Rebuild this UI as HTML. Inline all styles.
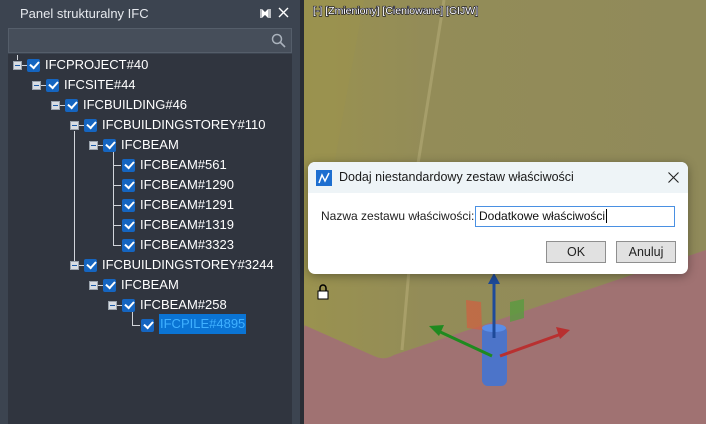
<!DOCTYPE html>
<html><head><meta charset="utf-8"><style>
*{margin:0;padding:0;box-sizing:border-box}
body{width:706px;height:424px;overflow:hidden;position:relative;font-family:"Liberation Sans",sans-serif;background:#2f343d}
#panel{position:absolute;left:0;top:0;width:303px;height:424px;background:#3c4450}
#title{position:absolute;left:20px;top:6px;color:#e6e9ee;font-size:13px}
#search{position:absolute;left:8px;top:28px;width:284px;height:25px;background:#464e5a;border:1px solid #555e6a}
#tree{position:absolute;left:8px;top:54px;width:284px;height:370px;background:#30353f}
#edge{position:absolute;left:292px;top:28px;width:8px;height:396px;background:#3c4450}
#edge2{position:absolute;left:300px;top:0;width:4px;height:424px;background:#2a2e35}
.r{position:absolute;height:20px;font-size:13px;color:#fff;line-height:20px}
.cb{position:absolute;width:13px;height:13px;background:#1565c0;border-radius:2px}
.cb:after{content:"";position:absolute;left:2.5px;top:2px;width:7px;height:4px;border-left:2px solid #fff;border-bottom:2px solid #fff;transform:rotate(-48deg)}
.ex{position:absolute;width:9px;height:9px;background:#d8dde3;border:1px solid #9aa3ad}
.ex:after{content:"";position:absolute;left:1px;top:3px;width:5px;height:1px;background:#1a5aa8}
.ln{position:absolute;background:#d0d4da}
#vp{position:absolute;left:304px;top:0;width:402px;height:424px;overflow:hidden}
#dlg{position:absolute;left:308px;top:162px;width:380px;height:112px;background:#fff;border-radius:7px;overflow:hidden;box-shadow:0 2px 10px rgba(0,0,0,.35)}
#dh{height:31px;background:#eef4f7;font-size:12.5px;color:#1a1a1a;line-height:31px;padding-left:31px;position:relative}
.btn{position:absolute;top:79px;width:60px;height:22px;background:#e1e1e1;border:1px solid #8f8f8f;font-size:12.5px;text-align:center;line-height:20px;color:#222}
</style></head><body>
<div id="panel">
<div id="title">Panel strukturalny IFC</div>
<svg style="position:absolute;left:260px;top:9px" width="11" height="9"><path d="M0 0v9M2 1l3.5 3.5L2 8zM10 0v9M8 1L4.5 4.5 8 8z" stroke="#fff" fill="#fff" stroke-width="1.3"/></svg>
<svg style="position:absolute;left:278px;top:7px" width="11" height="11"><path d="M1 1l9 9M10 1l-9 9" stroke="#fff" stroke-width="1.4"/></svg>
<div id="search"><svg style="position:absolute;left:262px;top:4px" width="15" height="15"><circle cx="6" cy="6" r="4.5" stroke="#aab2bc" stroke-width="1.5" fill="none"/><path d="M9.5 9.5l4.5 4.5" stroke="#aab2bc" stroke-width="1.6"/></svg></div>
<div id="tree"></div>
<div id="edge"></div><div id="edge2"></div>
<div class="ln" style="left:17px;top:55px;width:1px;height:5px"></div>
<div class="ln" style="left:74px;top:131px;width:1px;height:134px"></div>
<div class="ln" style="left:113px;top:151px;width:1px;height:94px"></div>
<div class="ln" style="left:113px;top:165px;width:8px;height:1px"></div>
<div class="ln" style="left:113px;top:185px;width:8px;height:1px"></div>
<div class="ln" style="left:113px;top:205px;width:8px;height:1px"></div>
<div class="ln" style="left:113px;top:225px;width:8px;height:1px"></div>
<div class="ln" style="left:113px;top:245px;width:8px;height:1px"></div>
<div class="ln" style="left:132px;top:311px;width:1px;height:14px"></div>
<div class="ln" style="left:132px;top:325px;width:8px;height:1px"></div>
<div class="ex" style="left:13px;top:61px"></div><div class="ln" style="left:22px;top:65px;width:5px;height:1px"></div>
<div class="ex" style="left:32px;top:81px"></div><div class="ln" style="left:41px;top:85px;width:5px;height:1px"></div>
<div class="ex" style="left:51px;top:101px"></div><div class="ln" style="left:60px;top:105px;width:5px;height:1px"></div>
<div class="ex" style="left:70px;top:121px"></div><div class="ln" style="left:79px;top:125px;width:5px;height:1px"></div>
<div class="ex" style="left:89px;top:141px"></div><div class="ln" style="left:98px;top:145px;width:5px;height:1px"></div>
<div class="ex" style="left:70px;top:261px"></div><div class="ln" style="left:79px;top:265px;width:5px;height:1px"></div>
<div class="ex" style="left:89px;top:281px"></div><div class="ln" style="left:98px;top:285px;width:5px;height:1px"></div>
<div class="ex" style="left:108px;top:301px"></div><div class="ln" style="left:117px;top:305px;width:5px;height:1px"></div>
<div class="cb" style="left:27px;top:59px"></div>
<div class="cb" style="left:46px;top:79px"></div>
<div class="cb" style="left:65px;top:99px"></div>
<div class="cb" style="left:84px;top:119px"></div>
<div class="cb" style="left:103px;top:139px"></div>
<div class="cb" style="left:122px;top:159px"></div>
<div class="cb" style="left:122px;top:179px"></div>
<div class="cb" style="left:122px;top:199px"></div>
<div class="cb" style="left:122px;top:219px"></div>
<div class="cb" style="left:122px;top:239px"></div>
<div class="cb" style="left:84px;top:259px"></div>
<div class="cb" style="left:103px;top:279px"></div>
<div class="cb" style="left:122px;top:299px"></div>
<div class="cb" style="left:141px;top:319px"></div>
<div class="r" style="left:45px;top:55px">IFCPROJECT#40</div>
<div class="r" style="left:64px;top:75px">IFCSITE#44</div>
<div class="r" style="left:83px;top:95px">IFCBUILDING#46</div>
<div class="r" style="left:102px;top:115px">IFCBUILDINGSTOREY#110</div>
<div class="r" style="left:121px;top:135px">IFCBEAM</div>
<div class="r" style="left:140px;top:155px">IFCBEAM#561</div>
<div class="r" style="left:140px;top:175px">IFCBEAM#1290</div>
<div class="r" style="left:140px;top:195px">IFCBEAM#1291</div>
<div class="r" style="left:140px;top:215px">IFCBEAM#1319</div>
<div class="r" style="left:140px;top:235px">IFCBEAM#3323</div>
<div class="r" style="left:102px;top:255px">IFCBUILDINGSTOREY#3244</div>
<div class="r" style="left:121px;top:275px">IFCBEAM</div>
<div class="r" style="left:140px;top:295px">IFCBEAM#258</div>
<div class="r" style="left:159px;top:314px;background:#0a74d4;color:#3fb0ff;padding:0 1px;height:20px">IFCPILE#4895</div>
</div>
<div id="vp">
<svg width="402" height="424" style="position:absolute;left:0;top:0">
<defs><linearGradient id="g" x1="0" x2="1"><stop offset="0" stop-color="#9a924f"/><stop offset="0.3" stop-color="#938c58"/><stop offset="1" stop-color="#908a5a"/></linearGradient></defs>
<rect width="402" height="424" fill="#a07272"/>
<path d="M0 0H402V250L90 355Q80 361 70 356L0 325Z" fill="url(#g)"/>
<path d="M0 0H60L0 330Z" fill="#9b934e" opacity=".6"/>
<path d="M140 0L113 170" stroke="#b3ab76" stroke-width="3" opacity=".6"/>
<path d="M98 350L105 270" stroke="#bcb27c" stroke-width="3" opacity=".5"/>
<text x="9" y="14" font-size="10.5" fill="#fff" stroke="#112" stroke-width="1.2" paint-order="stroke" font-family="Liberation Sans">[-] [Zmieniony] [Cieniowane] [GIJW]</text>
<path d="M162 300L177 302 178 330 163 328Z" fill="#d06040" opacity=".7"/>
<path d="M206 302L220 299 220 318 206 322Z" fill="#5a9a40" opacity=".8"/>
<rect x="178" y="326" width="25" height="60" rx="6" fill="#3d74d8" opacity=".85"/>
<ellipse cx="190" cy="328" rx="12" ry="4" fill="#5a8de8"/>
<path d="M190 338V280" stroke="#1d4a9a" stroke-width="3"/>
<path d="M184 284L190 273 196 284Z" fill="#1d4a9a"/>
<path d="M188 356L132 330" stroke="#1f8a1f" stroke-width="3"/>
<path d="M125 326L140 325 135 336Z" fill="#1f8a1f"/>
<path d="M196 356L260 333" stroke="#b83030" stroke-width="3"/>
<path d="M266 330L252 327 256 339Z" fill="#b83030"/>
<rect x="14" y="291" width="10" height="8" fill="#fff" stroke="#000"/>
<path d="M16 291v-3a3 3 0 0 1 6 0v3" stroke="#000" fill="none" stroke-width="1.5"/>
</svg>
</div>
<div id="dlg">
<div id="dh"><svg style="position:absolute;left:8px;top:8px" width="16" height="16"><rect width="16" height="16" fill="#1e6fd0"/><path d="M3 13L6 5 9 11 13 3" stroke="#fff" stroke-width="1.5" fill="none"/></svg>Dodaj niestandardowy zestaw właściwości
<svg style="position:absolute;right:9px;top:10px" width="11" height="11"><path d="M0.5 0.5l10 10M10.5 0.5l-10 10" stroke="#222" stroke-width="1.1"/></svg></div>
<div style="position:absolute;left:13px;top:47px;font-size:12px;color:#222">Nazwa zestawu właściwości:</div>
<div style="position:absolute;left:167px;top:44px;width:200px;height:21px;border:1px solid #4a90e2;font-size:12px;line-height:19px;padding-left:3px;color:#111">Dodatkowe właściwości<span style="border-left:1px solid #000;margin-left:1px"></span></div>
<div class="btn" style="left:238px">OK</div>
<div class="btn" style="left:308px">Anuluj</div>
</div>
</body></html>
